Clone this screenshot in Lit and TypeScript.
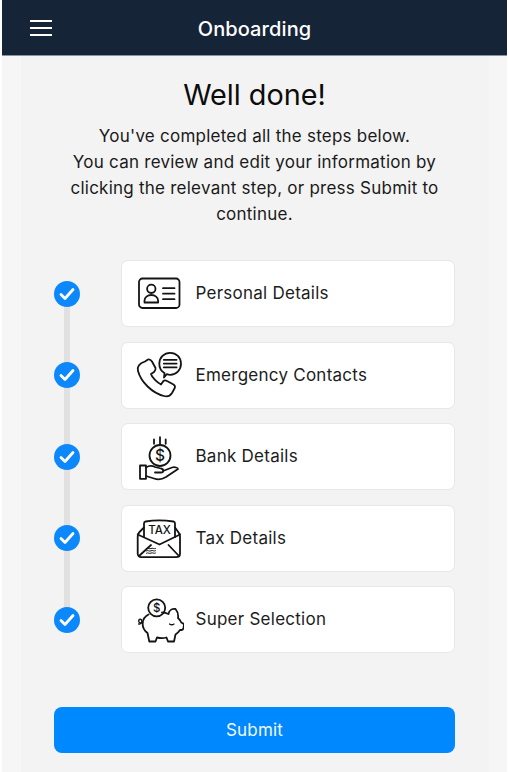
import { LitElement, html, css, svg } from 'lit';
import { customElement } from 'lit/decorators.js';

const idCard = svg`
  <rect x="5" y="9.5" width="40.5" height="29.5" rx="3.5" />
  <circle cx="17.3" cy="19.8" r="4.2" />
  <path d="M10.5 33.5v-2c0-3 3-5.5 6.8-5.5s6.8 2.500 6.8 5.500v2z" />
  <path d="M29 19.2h11.5M29 24.7h11.5M29 30.2h11.5" />
`;

const phone = svg`
  <path d="M11 11.5l3-2c2-.5 3 .5 4 2l3.500 6.500c.5 2-.5 3-1.500 4l-3 2c1 4 7 9 10 10.500l2-3c1-1 2.500-1.500 4-.5l6.500 3.500c1.500 1 2 2.500 1 4l-2.500 4.500c-2 3-5 4-8 3C18 43 7 32 4 21c-1-4 1-7.500 7-9.500z" />
  <path d="M30.500 23C27.200 21.200 25.300 17.700 25.300 13.800 25.300 7.600 30.100 2.800 36.200 2.800S47 7.600 47 13.800 42.200 24.800 36.200 24.800c-1.300 0-2.300-.2-3.400-.6l-2.800 3.300z" />
  <path d="M29.800 9.800h12.800M29.800 13.600h12.800M29.800 17.400h12.800" />
`;

const coinHand = svg`
  <path d="M20 7.500v4.300M26 5.200v6.600M31.700 7.500v4.300" />
  <circle cx="26" cy="23.500" r="10.500" />
  <text x="26" y="29" text-anchor="middle" class="glyph" font-size="15.500">$</text>
  <rect x="6" y="33.500" width="6" height="13.300" />
  <path d="M12 35.500c3-2 6-2 9-.5l6 1.500c3 .5 3 4 0 4h-6M29 39l9-3.500c3-1 6 .5 6 1.500L32 45c-4 2.500-8 3-12 1.500L12 44" />
`;

const taxEnvelope = svg`
  <path d="M10 14.500L5.500 19c-1.300 1.300-1.800 3-1.800 5v16.500c0 2 1.500 3.700 3.500 3.700h35c2.300 0 3.800-1.700 3.800-3.700V24c0-2-.5-3.700-1.800-5L41 14.500" />
  <path d="M10 24V10.500c0-1 .6-1.800 1.600-2 9-1.500 18-1.500 27.800 0 1 .2 1.600 1 1.600 2V24" />
  <path d="M3.700 21.500l21.800 10 20.500-10" />
  <path d="M5 43l12-11M45 43L34.500 32" />
  <text x="25.500" y="20.800" text-anchor="middle" class="glyph" font-size="11.500" letter-spacing=".5">TAX</text>
  <path d="M12.500 35.500c1.500-1 3 1 4.500 0s3 1 4.500 0M12.500 37.800c1.500-1 3 1 4.500 0s3 1 4.500 0M12.500 40.100c1.500-1 3 1 4.500 0s3 1 4.500 0" stroke-width="1" />
`;

const piggy = svg`
  <circle cx="22.700" cy="12.800" r="8.500" />
  <text x="22.700" y="17" text-anchor="middle" class="glyph" font-size="11.500">$</text>
  <path d="M14.500 19.500c-3 1.500-5.500 4.500-5.800 8.500-.3 4 1.500 7.500 4.800 10l1.800 8.500h6.200l1.500-4c3.500.8 6.500.8 9.500 0l1.500 4h6l1.500-7c2-1.300 3.500-3 4.500-4.500h2c1.500-.5 2-3 1.800-6l-2.500-1.500c-.8-1.800-2-3.500-3.300-4.500.6-3.500-.4-6.500-2.500-9-3.500-.5-6.500 1.500-7 5-2-1-4.500-1.500-6.500-1.500" />
  <path d="M35.500 29c1.500 1 3 1 4.500 0" stroke-width="1.300" />
  <path d="M8.700 27.500c-2 1-4 .5-4-1.500s2.500-2.500 3-.5-1.500 4-3 3.500" stroke-width="1.400" />
`;

const steps = [
  { label: 'Personal Details', icon: idCard },
  { label: 'Emergency Contacts', icon: phone },
  { label: 'Bank Details', icon: coinHand },
  { label: 'Tax Details', icon: taxEnvelope },
  { label: 'Super Selection', icon: piggy },
];

@customElement('app-root')
export class AppRoot extends LitElement {
  static styles = css`
    :host {
      display: block;
      min-height: 100vh;
      background: #fff;
      font-family: Inter, 'Liberation Sans', sans-serif;
      color: #111;
    }
    .page {
      margin: 0 2px;
      min-height: 772px;
      background: #f6f6f6;
      display: flex;
      flex-direction: column;
    }
    header {
      height: 55px;
      flex: none;
      background: #162438;
      border-bottom: 1px solid #8a93a5;
      display: flex;
      align-items: center;
      padding: 0 28px;
      position: relative;
    }
    .menu {
      display: flex;
      flex-direction: column;
      gap: 5.3px;
      width: 22px;
      margin-top: 1px;
    }
    .menu span {
      display: block;
      height: 2px;
      background: #fff;
    }
    .title {
      position: absolute;
      left: 0;
      right: 0;
      top: 15px;
      text-align: center;
      color: #fff;
      font-size: 20px;
      line-height: 28px;
      font-weight: 500;
      letter-spacing: 0.1px;
    }
    .content {
      margin: 0 18px 0 19px;
      background: #f3f3f3;
      flex: 1;
      padding: 21px 34px 0 33px;
      display: flex;
      flex-direction: column;
    }
    h1 {
      margin: 0;
      font-size: 28.8px;
      line-height: 36px;
      font-weight: 400;
      text-align: center;
      color: #0c0c0c;
    }
    .intro {
      margin: 10px 0 0;
      font-size: 17px;
      line-height: 26px;
      letter-spacing: 0.24px;
      text-align: center;
      color: #1a1a1a;
    }
    .steps {
      margin-top: 33px;
      display: flex;
      flex-direction: column;
      gap: 14.6px;
      position: relative;
    }
    .steps::before {
      content: '';
      position: absolute;
      left: 10px;
      width: 6px;
      top: 33px;
      bottom: 33px;
      background: #e1e1e1;
    }
    .step {
      display: flex;
      align-items: center;
      gap: 41px;
      position: relative;
    }
    .check {
      width: 26px;
      height: 26px;
      flex: none;
      border-radius: 50%;
      background: #0d88fb;
      display: flex;
      align-items: center;
      justify-content: center;
    }
    .card {
      flex: 1;
      height: 67px;
      box-sizing: border-box;
      background: #fff;
      border: 1px solid #e7e7e7;
      border-radius: 7px;
      display: flex;
      align-items: center;
      gap: 11.5px;
      padding-left: 12px;
      font-size: 17px;
      letter-spacing: 0.25px;
      color: #1c1c1c;
    }
    .card span {
      padding-bottom: 1px;
    }
    .icon {
      width: 50px;
      height: 50px;
      flex: none;
      fill: none;
      stroke: #141414;
      stroke-width: 1.800;
      stroke-linecap: round;
      stroke-linejoin: round;
    }
    .glyph {
      fill: #141414;
      stroke: none;
      font-family: Inter, 'Liberation Sans', sans-serif;
      font-weight: 500;
      letter-spacing: 0;
    }
    button {
      margin-top: 54px;
      height: 46px;
      border: none;
      border-radius: 8px;
      background: #0088ff;
      color: #f2f8ff;
      font: 400 17px Inter, 'Liberation Sans', sans-serif;
      letter-spacing: 0.2px;
      padding: 0;
    }
  `;

  render() {
    return html`
      <div class="page">
        <header>
          <div class="menu"><span></span><span></span><span></span></div>
          <div class="title">Onboarding</div>
        </header>
        <div class="content">
          <h1>Well done!</h1>
          <p class="intro">
            You've completed all the steps below.<br />
            You can review and edit your information by<br />
            clicking the relevant step, or press Submit to<br />
            continue.
          </p>
          <div class="steps">
            ${steps.map(
              (s) => html`
                <div class="step">
                  <div class="check">
                    <svg width="16" height="14" viewBox="0 0 16 14">
                      <path d="M2 7.500l4 4L14 2.500" fill="none" stroke="#fff" stroke-width="2.800" stroke-linecap="round" stroke-linejoin="round" />
                    </svg>
                  </div>
                  <div class="card">
                    <svg class="icon" viewBox="0 0 50 50">${s.icon}</svg>
                    <span>${s.label}</span>
                  </div>
                </div>
              `
            )}
          </div>
          <button>Submit</button>
        </div>
      </div>
    `;
  }
}
